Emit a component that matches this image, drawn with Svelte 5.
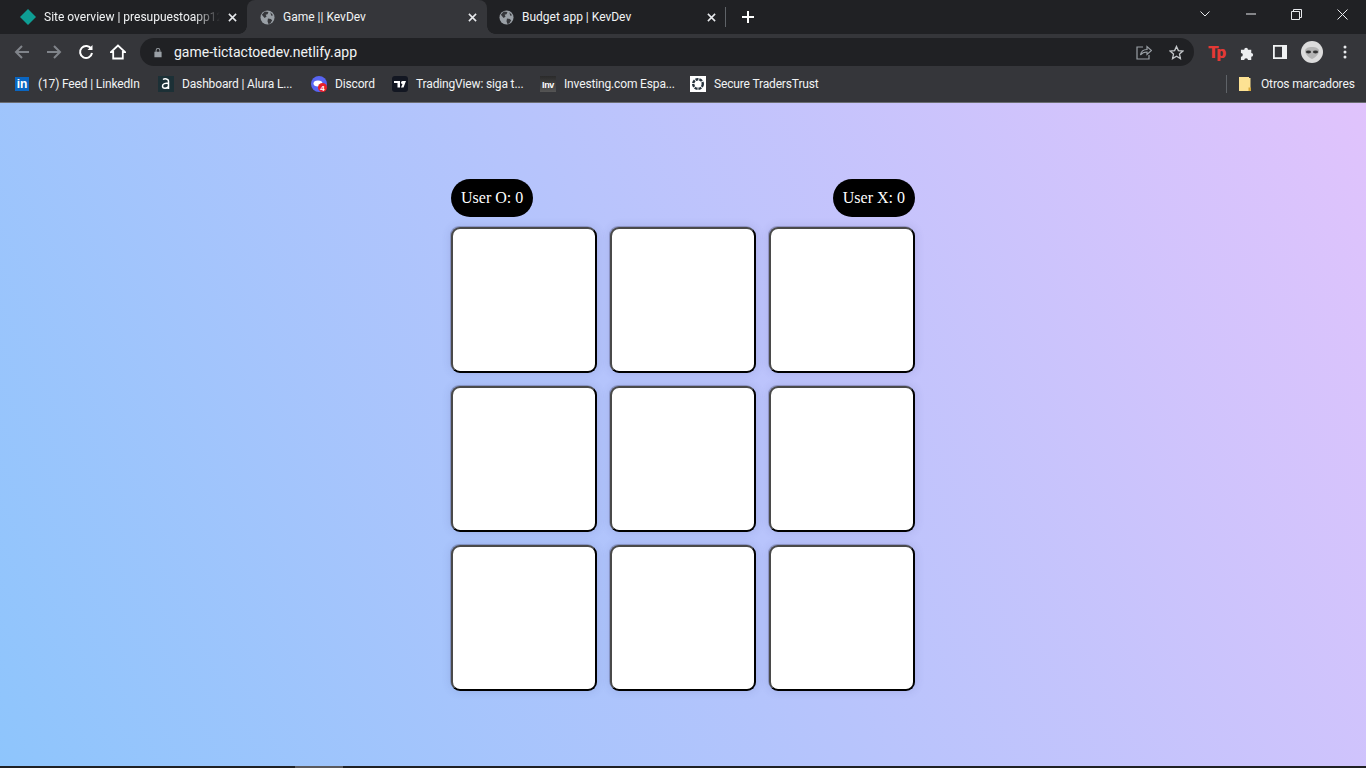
<script>
  const cells = Array.from({ length: 9 }, (_, i) => i);
</script>

{#snippet globe()}
  <svg class="fav" viewBox="0 0 16 16" aria-hidden="true">
    <circle cx="8" cy="8" r="7.500" fill="#9aa0a6" />
    <path d="M2 5l3-3.500 4 .5-1 2.500-2 .5 1 2-2 1.500-1-1zM8.500 9l3 .5 1.500 1.500-2 3.500-2 .5-1-3zM11 2.500l3 3-2 .5z" fill="#35363a" />
  </svg>
{/snippet}

{#snippet close()}
  <svg class="close" viewBox="0 0 10 10" aria-hidden="true"><path d="M1 1l8 8M9 1l-8 8" /></svg>
{/snippet}

<div class="window">
  <header class="tabstrip">
    <div class="tab first">
      <svg class="fav" viewBox="0 0 16 16" aria-hidden="true"><path d="M8 0l8 8-8 8-8-8z" fill="#0e9e94" /></svg>
      <span class="title fade">Site overview | presupuestoapp12</span>
      {@render close()}
    </div>
    <div class="tab active">
      {@render globe()}
      <span class="title">Game || KevDev</span>
      {@render close()}
    </div>
    <div class="tab last">
      {@render globe()}
      <span class="title">Budget app | KevDev</span>
      {@render close()}
    </div>
    <span class="sep"></span>
    <svg class="plus" viewBox="0 0 12 12" aria-hidden="true"><path d="M6 0v12M0 6h12" /></svg>
    <div class="winctl">
      <svg class="ctl chev" viewBox="0 0 10 6"><path d="M.5.5L5 5 9.500.5" /></svg>
      <svg class="ctl min" viewBox="0 0 10 2"><path d="M0 1h10" /></svg>
      <svg class="ctl rest" viewBox="0 0 11 11"><path d="M.5 2.500h8v8h-8zM2.500 2.500V.5h8v8h-2" /></svg>
      <svg class="ctl x" viewBox="0 0 11 11"><path d="M.5.5l10 10M10.500.5l-10 10" /></svg>
    </div>
  </header>

  <div class="toolbar">
    <svg class="nav back" viewBox="0 0 16 16"><path d="M15 8H2M8 2L2 8l6 6" /></svg>
    <svg class="nav fwd" viewBox="0 0 16 16"><path d="M1 8h13M8 2l6 6-6 6" /></svg>
    <svg class="nav reload" viewBox="0 0 16 16"><path d="M13.300 5A6 6 0 1 0 14 9" /><path class="solid" d="M14.500 1v5h-5z" /></svg>
    <svg class="nav home" viewBox="0 0 16 16"><path d="M8 1.500L1 8h2.200v6.500h9.600V8H15z" /></svg>
    <div class="omnibox">
      <svg class="lock" viewBox="0 0 10 12"><path d="M2 5V3.500a3 3 0 0 1 6 0V5h1.500v7H.5V5zM3.200 5h3.600V3.500a1.800 1.800 0 0 0-3.600 0z" /></svg>
      <span class="url">game-tictactoedev.netlify.app</span>
      <svg class="share" viewBox="0 0 16 16"><path d="M7 3H1v12h12v-4M4.500 11c.5-3.500 3-5.500 6.500-5.500V2.500L15.500 6.500 11 10.500V8c-2.500 0-5 1-6.500 3z" /></svg>
      <svg class="star" viewBox="0 0 16 16"><path d="M8 1.500l2 4.500 4.800.5-3.600 3.200 1 4.800L8 12l-4.200 2.500 1-4.800L1.200 6.500 6 6z" /></svg>
    </div>
    <span class="tp">Tp</span>
    <svg class="puzzle" viewBox="0 0 16 16"><path d="M1 5h3.500a2 2 0 1 1 4 0H12v3.500a2 2 0 1 1 0 4V16H8.500a2 2 0 1 0-4 0H1v-3.500a2 2 0 1 0 0-4z" /></svg>
    <svg class="panel" viewBox="0 0 14 14"><path fill-rule="evenodd" d="M0 0h14v14H0zM1.800 1.800v10.400H9V1.800z" /></svg>
    <svg class="avatar" viewBox="0 0 22 22">
      <circle cx="11" cy="11" r="11" fill="#dcdcdc" />
      <path d="M11 6c4 0 7 1.500 7 4 0 3-4 7-7 8-3-1-7-5-7-8 0-2.500 3-4 7-4z" fill="#b4b4b4" />
      <ellipse cx="7.500" cy="11" rx="2.600" ry="1.400" fill="#333" />
      <ellipse cx="14.500" cy="11" rx="2.600" ry="1.400" fill="#333" />
    </svg>
    <svg class="menu" viewBox="0 0 4 14"><circle cx="2" cy="2" r="1.500" /><circle cx="2" cy="7" r="1.500" /><circle cx="2" cy="12" r="1.500" /></svg>
  </div>

  <nav class="bookmarks">
    <div class="bm">
      <span class="ico li">in</span><span>(17) Feed | LinkedIn</span>
    </div>
    <div class="bm">
      <svg class="ico-svg" viewBox="0 0 16 16"><rect width="16" height="16" fill="#1c3036" /><path d="M5 3.500c1.500-1 5.500-1 5.500 2V13M10.500 7.500c-3-.5-6 0-6 2.500 0 3 4.500 3 6 .5" fill="none" stroke="#fff" stroke-width="1.500" /></svg>
      <span>Dashboard | Alura L...</span>
    </div>
    <div class="bm">
      <svg class="ico-svg" viewBox="0 0 16 16"><circle cx="8" cy="8" r="8" fill="#5865f2" /><ellipse cx="7" cy="7.500" rx="4.500" ry="3" fill="#fff" /><circle cx="11.500" cy="11.500" r="4.500" fill="#e8202a" /><text x="11.500" y="14.500" class="badge">4</text></svg>
      <span>Discord</span>
    </div>
    <div class="bm">
      <svg class="ico-svg" viewBox="0 0 16 16"><rect width="16" height="16" rx="3" fill="#131722" /><path d="M2 5h6v6.500H5.500V7H2zM10.500 5h3.500l-2.500 6.500H9l1.500-3.500a1.500 1.500 0 0 1 0-3z" fill="#fff" /></svg>
      <span>TradingView: siga t...</span>
    </div>
    <div class="bm">
      <span class="ico inv">Inv</span><span>Investing.com Espa...</span>
    </div>
    <div class="bm">
      <svg class="ico-svg" viewBox="0 0 16 16"><rect width="16" height="16" fill="#fff" /><circle cx="8" cy="8" r="4.800" fill="none" stroke="#26323c" stroke-width="2.400" stroke-dasharray="3 .9" /></svg>
      <span>Secure TradersTrust</span>
    </div>
    <div class="others">
      <span class="vline"></span>
      <svg class="folder" viewBox="0 0 12 14"><path d="M0 0h10v1h1.500v13H0z" fill="#fde293" /><path d="M9.500 10.500H12V14H9.500z" fill="#d9a93a" /></svg>
      <span>Otros marcadores</span>
    </div>
  </nav>

  <main class="page">
    <section class="game">
      <div class="scores">
        <div class="pill">User O: 0</div>
        <div class="pill">User X: 0</div>
      </div>
      <div class="board">
        {#each cells as c (c)}
          <div class="cell"></div>
        {/each}
      </div>
    </section>
  </main>

  <footer class="edge"><span class="thumb"></span></footer>
</div>

<style>
  :global(body) {
    margin: 0;
    background: #202124;
  }
  .window {
    width: 1366px;
    height: 768px;
    display: flex;
    flex-direction: column;
    overflow: hidden;
    font-family: Roboto, "Open Sans", sans-serif;
    color: #f1f3f4;
  }
  svg {
    display: block;
    flex: none;
  }

  .tabstrip {
    height: 34px;
    flex: none;
    display: flex;
    align-items: stretch;
    padding-left: 8px;
    background: #202124;
  }
  .tab {
    position: relative;
    width: 239px;
    display: flex;
    align-items: center;
    box-sizing: border-box;
    padding: 0 10px 0 12px;
    font-size: 12px;
  }
  .tab.active {
    width: 240px;
    padding-left: 13px;
    background: #35363a;
    border-radius: 8px 8px 0 0;
  }
  .tab.active::before,
  .tab.active::after {
    content: "";
    position: absolute;
    bottom: 0;
    width: 8px;
    height: 8px;
  }
  .tab.active::before {
    left: -8px;
    background: radial-gradient(circle at 0 0, transparent 7.500px, #35363a 8px);
  }
  .tab.active::after {
    right: -8px;
    background: radial-gradient(circle at 100% 0, transparent 7.500px, #35363a 8px);
  }
  .fav {
    width: 16px;
    height: 16px;
  }
  .active .fav,
  .last .fav {
    width: 15px;
    height: 15px;
  }
  .title {
    margin-left: 8px;
    flex: 1;
    min-width: 0;
    white-space: nowrap;
    overflow: hidden;
  }
  .fade {
    -webkit-mask-image: linear-gradient(90deg, #000 150px, transparent 176px);
    mask-image: linear-gradient(90deg, #000 150px, transparent 176px);
  }
  .close {
    width: 9px;
    height: 9px;
    fill: none;
    stroke: #e8eaed;
    stroke-width: 1.700;
  }
  .sep {
    width: 1px;
    height: 20px;
    margin: 7px 0 0 -1px;
    background: #5f6368;
  }
  .plus {
    width: 12px;
    height: 12px;
    margin: 11px 0 0 16px;
    fill: none;
    stroke: #fff;
    stroke-width: 2;
  }
  .winctl {
    margin-left: auto;
    display: flex;
    align-items: flex-start;
  }
  .ctl {
    fill: none;
    stroke: #e8eaed;
    stroke-width: 1;
  }
  .chev {
    width: 10px;
    height: 6px;
    margin: 11px 36px 0 0;
  }
  .min {
    width: 10px;
    height: 2px;
    margin: 13px 35px 0 0;
  }
  .rest {
    width: 11px;
    height: 11px;
    margin: 9px 35px 0 0;
  }
  .x {
    width: 11px;
    height: 11px;
    margin: 9px 18px 0 0;
  }

  .toolbar {
    height: 36px;
    flex: none;
    display: flex;
    align-items: center;
    background: #35363a;
  }
  .nav {
    width: 16px;
    height: 16px;
    fill: none;
    stroke-width: 2;
    stroke: #fff;
  }
  .back {
    margin-left: 14px;
    stroke: #80848a;
  }
  .fwd {
    margin-left: 16px;
    stroke: #80848a;
  }
  .reload {
    margin-left: 16px;
  }
  .reload .solid {
    fill: #fff;
    stroke: none;
  }
  .home {
    margin-left: 16px;
    stroke-width: 1.800;
  }
  .omnibox {
    width: 1054px;
    height: 28px;
    margin-left: 14px;
    box-sizing: border-box;
    padding: 0 10px 0 14px;
    display: flex;
    align-items: center;
    border-radius: 14px;
    background: #202124;
  }
  .lock {
    width: 8px;
    height: 11px;
    fill: #9aa0a6;
  }
  .url {
    margin-left: 12px;
    font-size: 14px;
    color: #f1f3f4;
  }
  .share {
    width: 16px;
    height: 16px;
    margin-left: auto;
    fill: none;
    stroke: #9aa0a6;
    stroke-width: 1.200;
  }
  .star {
    width: 15px;
    height: 15px;
    margin-left: 17px;
    fill: none;
    stroke: #c4c7ca;
    stroke-width: 1.400;
  }
  .tp {
    margin-left: 14px;
    width: 18px;
    font: 900 17px/16px Roboto, sans-serif;
    letter-spacing: -1.500px;
    color: #e53935;
  }
  .puzzle {
    width: 15px;
    height: 15px;
    margin-left: 14px;
    fill: #eceef0;
  }
  .panel {
    width: 14px;
    height: 14px;
    margin-left: 18px;
    fill: #f1f3f4;
  }
  .avatar {
    width: 22px;
    height: 22px;
    margin-left: 14px;
  }
  .menu {
    width: 4px;
    height: 14px;
    margin-left: 20px;
    fill: #e8eaed;
  }

  .bookmarks {
    height: 33px;
    flex: none;
    box-sizing: border-box;
    padding: 0 0 4px 15px;
    display: grid;
    grid-template-columns: 143px 153px 81px 148px 150px 1fr 140px;
    align-items: center;
    background: #35363a;
    border-bottom: 1px solid #6b6d72;
    font-size: 12px;
    letter-spacing: -0.15px;
    white-space: nowrap;
  }
  .bm {
    display: flex;
    align-items: center;
    gap: 8px;
  }
  .bm:nth-child(6) {
    grid-column: 6;
  }
  .ico-svg,
  .ico {
    width: 16px;
    height: 16px;
    flex: none;
  }
  .bm:first-child .ico {
    width: 14px;
    height: 14px;
    margin-right: 1px;
  }
  .li {
    background: #0a66c2;
    color: #fff;
    font: 700 12px/15px "Liberation Sans", sans-serif;
    text-align: center;
  }
  .badge {
    font: 700 8px "Liberation Sans", sans-serif;
    fill: #fff;
    text-anchor: middle;
  }
  .inv {
    background: linear-gradient(#2a2a2a, #555);
    color: #fff;
    font: 700 9px/18px "Liberation Sans", sans-serif;
    letter-spacing: -0.3px;
    text-align: center;
  }
  .others {
    display: flex;
    align-items: center;
  }
  .vline {
    width: 1px;
    height: 18px;
    flex: none;
    background: #5f6368;
    margin-right: 12px;
  }
  .folder {
    width: 12px;
    height: 14px;
    margin-right: 10px;
  }

  .page {
    flex: 1;
    min-height: 0;
    background-image: linear-gradient(62deg, #8ec5fc 0%, #e0c3fc 100%);
  }
  .game {
    width: 464px;
    margin: 76px auto 0;
    display: flex;
    flex-direction: column;
    gap: 10px;
    font-family: "Liberation Serif", serif;
  }
  .scores {
    display: flex;
    justify-content: space-between;
  }
  .pill {
    height: 38px;
    box-sizing: border-box;
    padding: 10px;
    border-radius: 20px;
    background: #000;
    color: #fff;
    font-size: 16px;
    line-height: 18px;
  }
  .board {
    display: grid;
    grid-template-columns: repeat(3, 146px);
    grid-auto-rows: 146px;
    gap: 13px;
  }
  .cell {
    box-sizing: border-box;
    background: #fff;
    border: 2px solid #4a4a4a;
    border-bottom-color: #000;
    border-right-color: #000;
    border-radius: 9px;
    box-shadow:
      -1px -1px 0 rgba(60, 60, 90, 0.3),
      0 0 10px rgba(60, 70, 130, 0.18);
  }

  .edge {
    height: 2px;
    flex: none;
    padding-left: 295px;
    background: #202124;
  }
  .thumb {
    display: block;
    width: 48px;
    height: 2px;
    background: #5a5a5e;
  }
</style>
